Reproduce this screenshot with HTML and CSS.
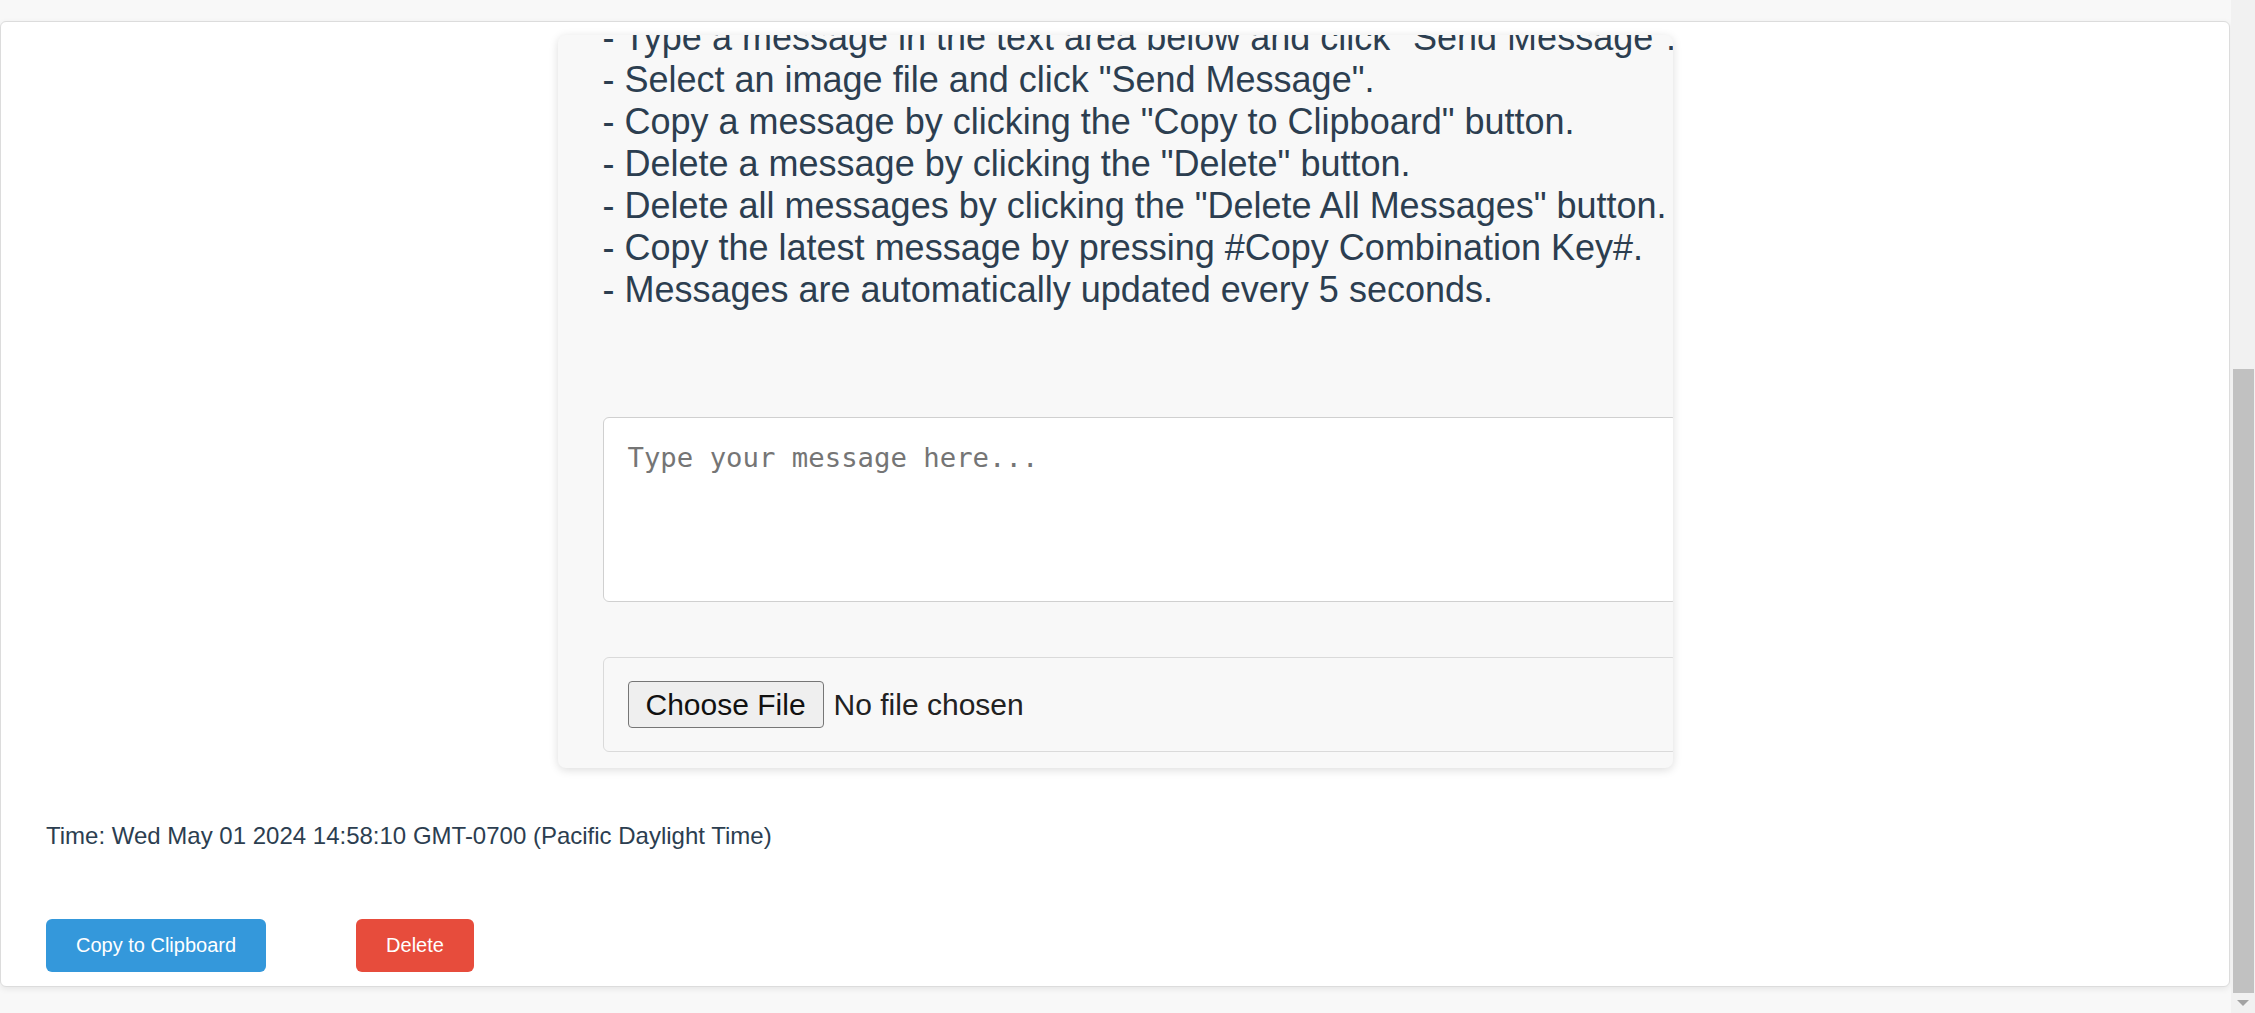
FILE: index.html
```html
<!DOCTYPE html>
<html lang="en">
<head>
<meta charset="utf-8">
<title>Messages</title>
<link rel="stylesheet" href="styles.css">
</head>
<body>
<div class="viewport">
  <div class="page">
    <div class="card">
      <div class="panel">
        <div class="instructions">
          <div class="line">- Type a message in the text area below and click "Send Message".</div>
          <div class="line">- Select an image file and click "Send Message".</div>
          <div class="line">- Copy a message by clicking the "Copy to Clipboard" button.</div>
          <div class="line">- Delete a message by clicking the "Delete" button.</div>
          <div class="line">- Delete all messages by clicking the "Delete All Messages" button.</div>
          <div class="line">- Copy the latest message by pressing #Copy Combination Key#.</div>
          <div class="line">- Messages are automatically updated every 5 seconds.</div>
        </div>
        <textarea class="msg" placeholder="Type your message here..."></textarea>
        <div class="filebox">
          <button class="choose" type="button">Choose File</button>
          <span class="nofile">No file chosen</span>
        </div>
      </div>
      <div class="time">Time: Wed May 01 2024 14:58:10 GMT-0700 (Pacific Daylight Time)</div>
      <div class="actions">
        <button class="btn copy" type="button">Copy to Clipboard</button>
        <button class="btn delete" type="button">Delete</button>
      </div>
    </div>
  </div>
  <div class="scrollbar">
    <div class="track-space"></div>
    <div class="thumb"></div>
    <div class="arrow-box"><div class="arrow"></div></div>
  </div>
</div>
</body>
</html>
```

FILE: styles.css
```css
* { box-sizing: border-box; }

html, body {
  margin: 0;
  padding: 0;
  height: 1013px;
  overflow: hidden;
  font-family: "Liberation Sans", Arial, sans-serif;
}

.viewport {
  display: flex;
  height: 1013px;
}

.page {
  flex: 1;
  background: #f8f8f8;
  padding-top: 21px;
}

.card {
  width: 2230px;
  background: #ffffff;
  border: 1px solid #dcdcdc;
  border-radius: 6px;
  box-shadow: 0 2px 6px rgba(0, 0, 0, 0.08);
  padding: 13px 0 14px 0;
}

.panel {
  width: 1115px;
  height: 733px;
  margin: 0 auto;
  background: #f8f8f8;
  border-radius: 8px;
  box-shadow: 0 2px 10px rgba(0, 0, 0, 0.14);
  padding: 0 45px 16px 45px;
  overflow: hidden;
}

.instructions {
  margin-top: -18px;
  font-size: 36px;
  line-height: 42px;
  color: #2c3e50;
  white-space: nowrap;
}

.msg {
  display: block;
  box-sizing: content-box;
  width: 100%;
  height: 137px;
  margin: 106px 0 0 0;
  padding: 24px 24px 22px 24px;
  border: 1px solid #d0d0d0;
  border-radius: 6px;
  background: #ffffff;
  font-family: "DejaVu Sans Mono", "Liberation Mono", monospace;
  font-size: 27.3px;
  resize: none;
  outline: none;
}

.msg::placeholder {
  color: #757575;
}

.filebox {
  box-sizing: content-box;
  width: 100%;
  height: 47px;
  margin-top: 55px;
  padding: 23px 24px;
  border: 1px solid #dadada;
  border-radius: 6px;
  background: #f8f8f8;
  display: flex;
  align-items: center;
}

.choose {
  height: 47px;
  padding: 0 17px;
  border: 1px solid #767676;
  border-radius: 4px;
  background: #efefef;
  color: #111111;
  font-family: "Liberation Sans", Arial, sans-serif;
  font-size: 30px;
  line-height: 45px;
}

.nofile {
  margin-left: 10px;
  font-size: 30px;
  color: #222222;
}

.time {
  margin-top: 54px;
  padding-left: 45px;
  font-size: 24px;
  color: #2c3e50;
}

.actions {
  margin-top: 69px;
  padding-left: 45px;
  display: flex;
}

.btn {
  height: 53px;
  padding: 0 30px;
  border: none;
  border-radius: 6px;
  color: #ffffff;
  font-family: "Liberation Sans", Arial, sans-serif;
  font-size: 20px;
}

.copy { background: #3498db; }

.delete {
  background: #e74c3c;
  margin-left: 90px;
}

.scrollbar {
  width: 24px;
  background: #f1f1f1;
  display: flex;
  flex-direction: column;
}

.track-space { flex: 1; }

.thumb {
  height: 624px;
  margin: 0 1px 0 2px;
  background: #c1c1c1;
}

.arrow-box {
  height: 20px;
  display: flex;
  justify-content: center;
  align-items: center;
}

.arrow {
  width: 0;
  height: 0;
  border-left: 6px solid transparent;
  border-right: 6px solid transparent;
  border-top: 6px solid #a3a3a3;
}
```
